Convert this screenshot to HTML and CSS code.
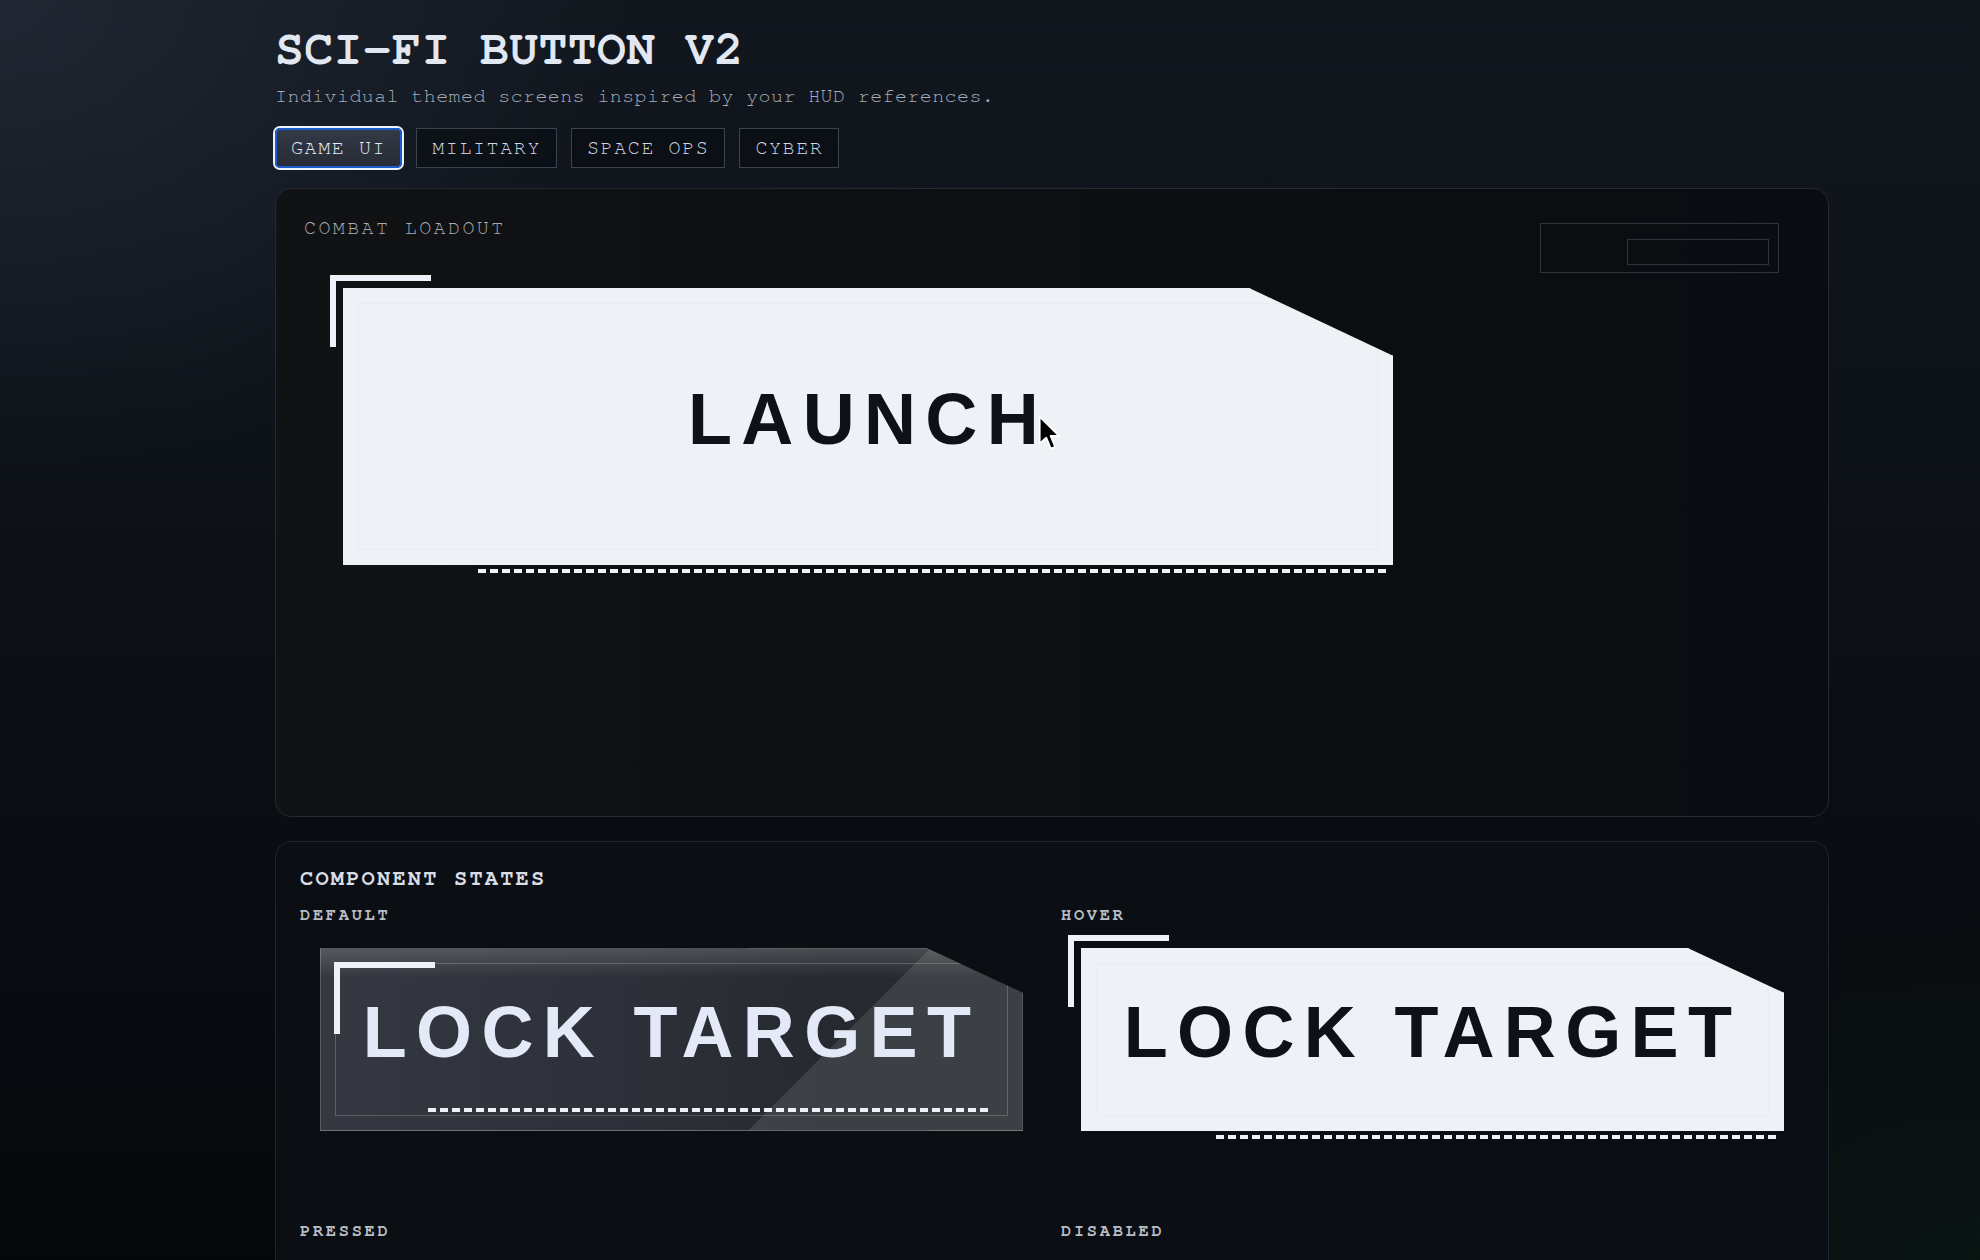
FILE: index.html
```html
<!DOCTYPE html>
<html lang="en">
<head>
    <meta charset="UTF-8">
    <meta name="viewport" content="width=device-width, initial-scale=1.0">
    <title>Sci-Fi Button V2</title>
    <link rel="stylesheet" href="styles.css">
</head>
<body>
<div class="shell">
    <h1>SCI-FI BUTTON V2</h1>
    <p class="lede">Individual themed screens inspired by your HUD references.</p>

    <!-- Theme tabs -->
    <nav class="tabs">
        <button class="tab active">GAME UI</button>
        <button class="tab">MILITARY</button>
        <button class="tab">SPACE OPS</button>
        <button class="tab">CYBER</button>
    </nav>

    <!-- Main themed screen -->
    <section class="screen">
        <header class="screen-head">
            <span class="screen-label">COMBAT LOADOUT</span>
            <div class="scan"><div class="scan-bar"></div></div>
        </header>
        <div class="stage">
            <div class="hud-btn hud-btn-lg is-hover">
                <div class="face">
                    <span class="frame"></span>
                    <span class="label">LAUNCH</span>
                </div>
                <span class="bracket"></span>
                <span class="dashes"></span>
                <svg class="cursor" viewBox="0 0 14 22" width="23" height="36">
                    <path d="M1 1 L1 17.5 L5 13.8 L7.8 20.5 L10.4 19.4 L7.7 12.8 L12.8 12.8 Z" fill="#000" stroke="#fff" stroke-width="1.1" stroke-linejoin="round"/>
                </svg>
            </div>
        </div>
    </section>

    <!-- Component states -->
    <section class="states">
        <h2>COMPONENT STATES</h2>
        <div class="state-grid">
            <div class="state">
                <h3>DEFAULT</h3>
                <div class="state-stage">
                    <div class="hud-btn">
                        <div class="face"><span class="frame"></span><span class="label">LOCK TARGET</span></div>
                        <span class="bracket"></span>
                        <span class="dashes"></span>
                    </div>
                </div>
            </div>
            <div class="state">
                <h3>HOVER</h3>
                <div class="state-stage">
                    <div class="hud-btn is-hover">
                        <div class="face"><span class="frame"></span><span class="label">LOCK TARGET</span></div>
                        <span class="bracket"></span>
                        <span class="dashes"></span>
                    </div>
                </div>
            </div>
            <div class="state">
                <h3>PRESSED</h3>
                <div class="state-stage">
                    <div class="hud-btn is-pressed">
                        <div class="face"><span class="frame"></span><span class="label">LOCK TARGET</span></div>
                        <span class="bracket"></span>
                        <span class="dashes"></span>
                    </div>
                </div>
            </div>
            <div class="state">
                <h3>DISABLED</h3>
                <div class="state-stage">
                    <div class="hud-btn is-disabled">
                        <div class="face"><span class="frame"></span><span class="label">LOCK TARGET</span></div>
                        <span class="bracket"></span>
                        <span class="dashes"></span>
                    </div>
                </div>
            </div>
        </div>
    </section>
</div>
</body>
</html>
```

FILE: styles.css
```css
* {
    box-sizing: border-box;
}
html, body {
    margin: 0;
    min-height: 100%;
}
body {
    font-family: "Nimbus Mono PS", "Nimbus Mono L", "FreeMono", "Courier 10 Pitch", "Courier", "Liberation Mono", monospace;
    color: #e2e8f0;
    padding-top: 22px;
    background:
        radial-gradient(ellipse 900px 700px at 0% 0%, rgba(42, 50, 64, 0.6), transparent 70%),
        radial-gradient(ellipse 900px 500px at 100% 100%, rgba(18, 44, 32, 0.35), transparent 70%),
        linear-gradient(180deg, #12171f 0%, #0b0f15 55%, #05080b 100%);
    background-attachment: fixed;
}
.shell {
    width: 1554px;
    margin-left: 275px;
    padding-bottom: 60px;
}
h1 {
    margin: 0;
    font-size: 48px;
    line-height: 56px;
    font-weight: bold;
    letter-spacing: 0.01em;
    color: #e2e8f2;
}
.lede {
    margin: 6px 0 0;
    font-size: 20px;
    line-height: 24px;
    letter-spacing: 0.02em;
    color: #a4acb8;
}

/* tabs */
.tabs {
    display: flex;
    gap: 14px;
    margin-top: 20px;
}
.tab {
    font-family: inherit;
    font-size: 20px;
    line-height: 20px;
    letter-spacing: 0.08em;
    padding: 9px 15px;
    color: #d2d8e1;
    background: rgba(8, 11, 16, 0.55);
    border: 1px solid #3b4250;
    border-radius: 0;
}
.tab.active {
    padding: 8px 14px;
    color: #e8edf5;
    background: linear-gradient(180deg, #333946, #272c36);
    border: 2px solid #1d5ccc;
    border-radius: 5px;
    box-shadow: 0 0 0 2px #eef3fb;
}

/* themed screen */
.screen {
    margin-top: 20px;
    height: 629px;
    padding: 29px 28px;
    border: 1px solid #242a33;
    border-radius: 16px;
    background: linear-gradient(90deg, #111214 0%, #0c0e11 60%, #090d11 100%);
}
.screen-head {
    display: flex;
    justify-content: space-between;
    align-items: flex-start;
    padding-right: 21px;
}
.screen-label {
    font-size: 20px;
    line-height: 20px;
    letter-spacing: 0.12em;
    color: #a8acb2;
}
.scan {
    width: 239px;
    height: 50px;
    margin-top: 5px;
    padding: 15px 9px 7px;
    display: flex;
    justify-content: flex-end;
    border: 1px solid #30343a;
}
.scan-bar {
    width: 142px;
    height: 100%;
    border: 1px solid #30343a;
}
.stage {
    padding: 15px 0 0 39px;
}

/* HUD button */
.hud-btn {
    position: relative;
    width: 100%;
    height: 183px;
}
.hud-btn-lg {
    width: 1050px;
    height: 277px;
}
.face {
    position: relative;
    height: 100%;
    display: flex;
    align-items: center;
    justify-content: center;
    padding-bottom: 16px;
    clip-path: polygon(0 0, 86.3% 0, 100% 24.5%, 100% 100%, 0 100%);
    border: 1px solid rgba(255, 255, 255, 0.16);
    background:
        linear-gradient(135deg, transparent 69%, rgba(255, 255, 255, 0.1) 69%),
        linear-gradient(180deg, rgba(255, 255, 255, 0.16), rgba(255, 255, 255, 0) 16%),
        linear-gradient(90deg, #343841 0%, #2d3038 45%, #26292f 72%);
}
.frame {
    position: absolute;
    top: 14px;
    left: 14px;
    right: 14px;
    bottom: 14px;
    border: 1px solid rgba(255, 255, 255, 0.2);
}
.label {
    font-family: "Liberation Sans", Arial, sans-serif;
    font-weight: bold;
    font-size: 72px;
    letter-spacing: 0.13em;
    color: #e4e9f7;
}
.bracket {
    position: absolute;
    top: 14px;
    left: 14px;
    width: 101px;
    height: 72px;
    border-top: 6px solid #eef2f8;
    border-left: 6px solid #eef2f8;
}
.dashes {
    position: absolute;
    left: 108px;
    right: 34px;
    bottom: 19px;
    height: 4px;
    background: repeating-linear-gradient(90deg, #eef2f8 0 8px, transparent 8px 12px);
}
.cursor {
    position: absolute;
    left: 695px;
    top: 127px;
}

/* hover: solid face, bracket and dashes pushed outside */
.hud-btn.is-hover .face {
    background: #eef2f7;
    border-color: #eef2f7;
}
.hud-btn.is-hover .frame {
    border-color: rgba(20, 28, 40, 0.025);
}
.hud-btn.is-hover .label {
    color: #0e1218;
}
.hud-btn.is-hover .bracket {
    transform: translate(-27px, -27px);
}
.hud-btn.is-hover .dashes {
    transform: translate(27px, 27px);
}

.hud-btn.is-pressed .face {
    transform: translateY(3px);
    background: linear-gradient(90deg, #1d2026, #17191e);
}
.hud-btn.is-disabled {
    opacity: 0.35;
}

/* states panel */
.states {
    margin-top: 24px;
    padding: 24px 24px 40px;
    border: 1px solid #1f252e;
    border-radius: 16px;
    background: linear-gradient(180deg, #0b0e12, #0a0d11);
}
.states h2 {
    margin: 0;
    font-size: 22px;
    line-height: 24px;
    letter-spacing: 0.1em;
    color: #d8dde5;
}
.state-grid {
    display: grid;
    grid-template-columns: 1fr 1fr;
    column-gap: 18px;
    row-gap: 43px;
    margin-top: 16px;
}
.state h3 {
    margin: 0;
    font-size: 17px;
    line-height: 18px;
    letter-spacing: 0.16em;
    color: #b9bec6;
}
.state-stage {
    padding: 24px 20px 48px;
}
```
